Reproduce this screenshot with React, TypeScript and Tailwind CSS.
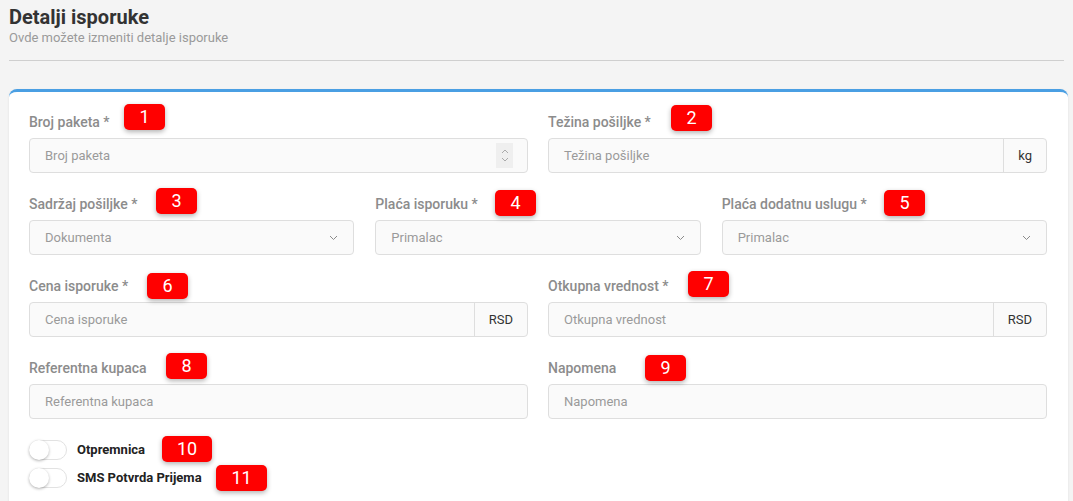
import React from 'react';

function Badge({ n, left, top, w = 41 }: { n: string; left: number; top: number; w?: number }) {
  return (
    <div
      className="absolute h-[26px] rounded-[5px] bg-[#ff0000] text-white text-[18px] leading-[26px] text-center shadow-[0_2px_5px_rgba(0,0,0,0.3)]"
      style={{ left, top, width: w }}
    >
      {n}
    </div>
  );
}

function Label({ children }: { children: React.ReactNode }) {
  return <label className="block text-[14px] leading-[20px] font-medium text-[#8c8c8c] mb-[6px]">{children}</label>;
}

const inputBox = 'h-[35px] bg-[#fafafa] border border-[#dedede] rounded-[4px] flex items-center text-[13px] text-[#9a9a9a]';

function Chevron() {
  return (
    <svg width="9" height="6" viewBox="0 0 9 6" className="text-[#8a8a8a]">
      <path d="M1 1l3.5 3.5L8 1" fill="none" stroke="currentColor" strokeWidth="1" />
    </svg>
  );
}

function TextInput({ placeholder, addon }: { placeholder: string; addon?: string }) {
  return (
    <div className={inputBox}>
      <span className="flex-1 pl-[15px]">{placeholder}</span>
      {addon && (
        <span className="h-full px-[14px] border-l border-[#dedede] flex items-center text-[#333]">{addon}</span>
      )}
    </div>
  );
}

function NumberInput({ placeholder }: { placeholder: string }) {
  return (
    <div className={inputBox}>
      <span className="flex-1 pl-[15px]">{placeholder}</span>
      <span className="w-[17px] h-[25px] mr-[14px] bg-[#efefef] flex flex-col items-center justify-center gap-[3px]">
        <svg width="8" height="5" viewBox="0 0 8 5"><path d="M1 4l3-3 3 3" fill="none" stroke="#aaa" strokeWidth="1" /></svg>
        <svg width="8" height="5" viewBox="0 0 8 5"><path d="M1 1l3 3 3-3" fill="none" stroke="#aaa" strokeWidth="1" /></svg>
      </span>
    </div>
  );
}

function SelectInput({ value }: { value: string }) {
  return (
    <div className={inputBox}>
      <span className="flex-1 pl-[15px]">{value}</span>
      <span className="mr-[15px] flex items-center"><Chevron /></span>
    </div>
  );
}

function Toggle({ label }: { label: string }) {
  return (
    <div className="flex items-center h-[20px]">
      <div className="relative w-[38px] h-[20px] rounded-full border border-[#e2e2e2] bg-white">
        <div className="absolute left-[-1px] top-[-1px] w-[20px] h-[20px] rounded-full bg-white shadow-[0_1px_3px_rgba(0,0,0,0.3)]" />
      </div>
      <span className="ml-[10px] text-[13px] font-bold text-[#222]">{label}</span>
    </div>
  );
}

export default function App() {
  return (
    <div className="relative min-h-[501px] bg-[#f4f4f4] overflow-hidden" style={{ fontFamily: 'Roboto, "Liberation Sans", sans-serif' }}>
      <div className="px-[9px] pt-[4px]">
        <h1 className="text-[20px] leading-[26px] font-bold text-[#333]">Detalji isporuke</h1>
        <p className="text-[13px] leading-[16px] text-[#9a9a9a]">Ovde možete izmeniti detalje isporuke</p>
      </div>
      <hr className="mx-[9px] mt-[14px] border-t border-[#cfcfcf]" />

      <div className="ml-[9px] mr-[5px] mt-[28px] bg-white rounded-t-[8px] border-t-[3px] border-[#4a9fe3] pl-[20px] pr-[21px] pt-[20px] pb-[30px] shadow-[0_1px_3px_rgba(0,0,0,0.08)]">
        <div className="grid grid-cols-2 gap-x-[20px]">
          <div>
            <Label>Broj paketa *</Label>
            <NumberInput placeholder="Broj paketa" />
          </div>
          <div>
            <Label>Težina pošiljke *</Label>
            <TextInput placeholder="Težina pošiljke" addon="kg" />
          </div>
        </div>

        <div className="grid grid-cols-3 gap-x-[21px] mt-[21px]">
          <div>
            <Label>Sadržaj pošiljke *</Label>
            <SelectInput value="Dokumenta" />
          </div>
          <div>
            <Label>Plaća isporuku *</Label>
            <SelectInput value="Primalac" />
          </div>
          <div>
            <Label>Plaća dodatnu uslugu *</Label>
            <SelectInput value="Primalac" />
          </div>
        </div>

        <div className="grid grid-cols-2 gap-x-[20px] mt-[21px]">
          <div>
            <Label>Cena isporuke *</Label>
            <TextInput placeholder="Cena isporuke" addon="RSD" />
          </div>
          <div>
            <Label>Otkupna vrednost *</Label>
            <TextInput placeholder="Otkupna vrednost" addon="RSD" />
          </div>
        </div>

        <div className="grid grid-cols-2 gap-x-[20px] mt-[21px]">
          <div>
            <Label>Referentna kupaca</Label>
            <TextInput placeholder="Referentna kupaca" />
          </div>
          <div>
            <Label>Napomena</Label>
            <TextInput placeholder="Napomena" />
          </div>
        </div>

        <div className="mt-[21px] flex flex-col gap-[8px]">
          <Toggle label="Otpremnica" />
          <Toggle label="SMS Potvrda Prijema" />
        </div>
      </div>

      <Badge n="1" left={124} top={104} />
      <Badge n="2" left={671} top={105} />
      <Badge n="3" left={156} top={188} />
      <Badge n="4" left={495} top={190} />
      <Badge n="5" left={884} top={190} />
      <Badge n="6" left={147} top={273} />
      <Badge n="7" left={688} top={271} />
      <Badge n="8" left={166} top={353} />
      <Badge n="9" left={645} top={355} />
      <Badge n="10" left={162} top={436} w={50} />
      <Badge n="11" left={216} top={465} w={51} />
    </div>
  );
}
